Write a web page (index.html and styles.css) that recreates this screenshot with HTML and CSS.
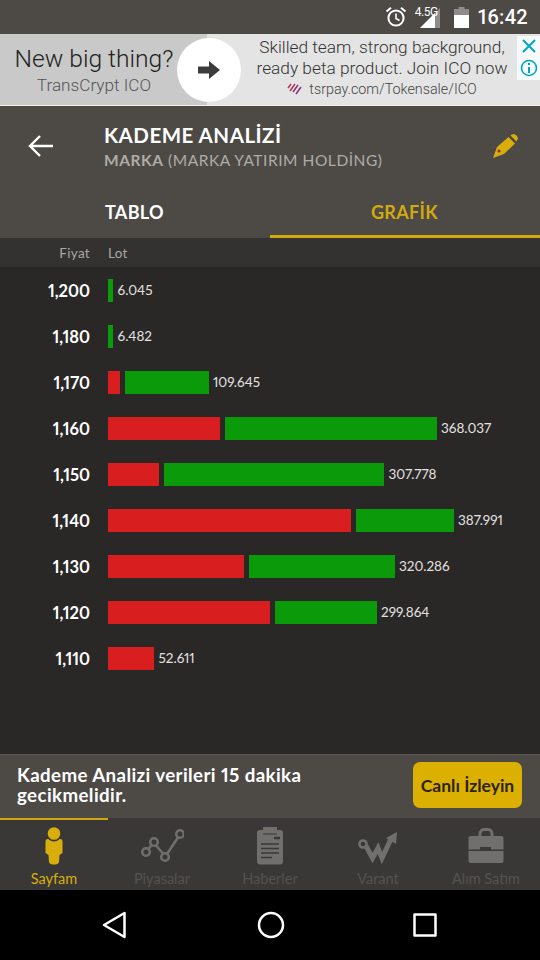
FILE: index.html
```html
<!DOCTYPE html>
<html lang="tr">
<head>
    <meta charset="UTF-8">
    <meta name="viewport" content="width=device-width, initial-scale=1.0">
    <title>Kademe Analizi</title>
    <link rel="stylesheet" href="styles.css">
</head>
<body>
    <div class="phone">
        <div class="status-bar">
            <svg class="st-alarm" width="22" height="22" viewBox="0 0 22 22" fill="none" stroke="#fff">
                <circle cx="11" cy="12" r="7.6" stroke-width="2"/>
                <path d="M11 7.5V12.5L14.5 14.5" stroke-width="1.6"/>
                <path d="M1.5 5.5L6 1.8M20.5 5.5L16 1.8" stroke-width="2"/>
            </svg>
            <div class="st-signal">
                <span class="st-net">4.5G</span>
                <svg width="20" height="20" viewBox="0 0 20 20">
                    <path d="M20 0V20H0Z" fill="#8f8c89"/>
                    <path d="M15 5V20H0Z" fill="#fff"/>
                </svg>
            </div>
            <svg class="st-batt" width="15" height="21" viewBox="0 0 15 21">
                <path d="M4.5 0H10.5V2H15V21H0V2H4.5Z" fill="#8f8c89"/>
                <path d="M0 8H15V21H0Z" fill="#fff"/>
            </svg>
            <span class="st-time">16:42</span>
        </div>

        <div class="ad">
            <div class="ad-left">
                <div class="ad-title">New big thing?</div>
                <div class="ad-sub">TransCrypt ICO</div>
            </div>
            <div class="ad-right">
                <div class="ad-copy">Skilled team, strong background,<br>ready beta product. Join ICO now</div>
                <div class="ad-link">
                    <svg width="16" height="14" viewBox="0 0 16 14" fill="none" stroke-width="1.6">
                        <path d="M1 6L4 2M3 9L8 2" stroke="#b8395f"/>
                        <path d="M6 10L11 3M9 12L14 5" stroke="#8a3a78"/>
                    </svg>
                    <span>tsrpay.com/Tokensale/ICO</span>
                </div>
            </div>
            <div class="ad-go">
                <svg width="22" height="18" viewBox="0 0 22 18"><path d="M0 5.5H11V0L22 9 11 18V12.5H0Z" fill="#3c3c3c"/></svg>
            </div>
            <div class="ad-badges">
                <svg width="16" height="16" viewBox="0 0 16 16" fill="none" stroke="#00a5c8" stroke-width="2"><path d="M2 2L14 14M14 2L2 14"/></svg>
                <svg width="18" height="18" viewBox="0 0 18 18" fill="none" stroke="#00a5c8" stroke-width="1.6">
                    <circle cx="9" cy="9" r="7.5"/>
                    <path d="M9 8V14M9 4V6" stroke-width="2"/>
                </svg>
            </div>
        </div>

        <div class="top-panel">
            <div class="title-row">
                <svg class="back" width="26" height="24" viewBox="0 0 26 24" fill="none" stroke="#fff" stroke-width="2.4"><path d="M25 12H2M12 2L2 12L12 22"/></svg>
                <div class="titles">
                    <h1>KADEME ANALİZİ</h1>
                    <p><b>MARKA</b> (MARKA YATIRIM HOLDİNG)</p>
                </div>
                <svg class="pencil" width="26" height="26" viewBox="0 0 26 26">
                    <path d="M1 25L5 14 16.5 4 23 10.5 12 21Z" fill="#d9ad0b"/>
                    <path d="M18.5 2.500C20.5.5 22.5.5 24.5 2.5S26 6.5 24.5 8.5Z" fill="#d9ad0b"/>
                    <circle cx="7" cy="18" r="1.6" fill="#8a3a18"/>
                </svg>
            </div>
            <div class="tabs">
                <div class="tab">TABLO</div>
                <div class="tab tab-on">GRAFİK</div>
            </div>
        </div>

        <div class="col-head">
            <span class="col-price">Fiyat</span>
            <span>Lot</span>
        </div>

        <div class="chart">
            <div class="row">
                <span class="price">1,200</span>
                <div class="bars"><i class="bar green" style="width:5px"></i><span class="lot">6.045</span></div>
            </div>
            <div class="row">
                <span class="price">1,180</span>
                <div class="bars"><i class="bar green" style="width:5px"></i><span class="lot">6.482</span></div>
            </div>
            <div class="row">
                <span class="price">1,170</span>
                <div class="bars"><i class="bar red" style="width:12px"></i><i class="bar green" style="width:84px"></i><span class="lot">109.645</span></div>
            </div>
            <div class="row">
                <span class="price">1,160</span>
                <div class="bars"><i class="bar red" style="width:112px"></i><i class="bar green" style="width:212px"></i><span class="lot">368.037</span></div>
            </div>
            <div class="row">
                <span class="price">1,150</span>
                <div class="bars"><i class="bar red" style="width:51px"></i><i class="bar green" style="width:220.5px"></i><span class="lot">307.778</span></div>
            </div>
            <div class="row">
                <span class="price">1,140</span>
                <div class="bars"><i class="bar red" style="width:243px"></i><i class="bar green" style="width:98px"></i><span class="lot">387.991</span></div>
            </div>
            <div class="row">
                <span class="price">1,130</span>
                <div class="bars"><i class="bar red" style="width:136px"></i><i class="bar green" style="width:146px"></i><span class="lot">320.286</span></div>
            </div>
            <div class="row">
                <span class="price">1,120</span>
                <div class="bars"><i class="bar red" style="width:162px"></i><i class="bar green" style="width:102px"></i><span class="lot">299.864</span></div>
            </div>
            <div class="row">
                <span class="price">1,110</span>
                <div class="bars"><i class="bar red" style="width:46px"></i><span class="lot">52.611</span></div>
            </div>
        </div>

        <div class="notice">
            <p>Kademe Analizi verileri 15 dakika<br>gecikmelidir.</p>
            <button type="button">Canlı İzleyin</button>
        </div>

        <nav class="tabbar">
            <div class="nav-item nav-on">
                <svg width="18" height="38" viewBox="0 0 18 38">
                    <path d="M3 12H15C17 12 17.5 13 17.5 15V26L14.5 28 14 35C13.5 37 11.5 37.5 9 37.5S4.5 37 4 35L3.5 28 .5 26V15C.5 13 1 12 3 12Z" fill="#d9ad0b"/>
                    <circle cx="9" cy="7" r="7.5" fill="#3a3836"/>
                    <circle cx="9" cy="6.5" r="6.3" fill="#d9ad0b"/>
                </svg>
                <span>Sayfam</span>
            </div>
            <div class="nav-item">
                <svg width="44" height="36" viewBox="0 0 44 36" fill="none" stroke="#716f6c" stroke-width="2.5">
                    <circle cx="6" cy="24" r="3.8"/>
                    <circle cx="14" cy="14" r="3.8"/>
                    <circle cx="25" cy="29" r="3.8"/>
                    <circle cx="40" cy="6" r="3.8"/>
                    <path d="M8.5 21L11.5 17M16 17.5L23 25.5M27 26L38 9.5"/>
                </svg>
                <span>Piyasalar</span>
            </div>
            <div class="nav-item">
                <svg width="26" height="38" viewBox="0 0 26 38">
                    <path d="M3 3H6V0H20V3H23C25 3 26 4 26 6V34C26 36.5 25 37.5 23 37.5H3C1 37.5 0 36.5 0 34V6C0 4 1 3 3 3Z" fill="#716f6c"/>
                    <path d="M4 17H22M4 21.5H22M4 26H22M4 30.5H15" stroke="#3a3836" stroke-width="1.6"/>
                    <path d="M17 11H23" stroke="#3a3836" stroke-width="2.5"/>
                    <path d="M6 7H20" stroke="#3a3836" stroke-width="1"/>
                </svg>
                <span>Haberler</span>
            </div>
            <div class="nav-item">
                <svg width="40" height="38" viewBox="0 0 40 38" fill="none">
                    <circle cx="5" cy="17" r="3.6" stroke="#716f6c" stroke-width="2.5"/>
                    <path d="M8 19L14.5 31 20 21 24 31 33 12" stroke="#716f6c" stroke-width="5"/>
                    <path d="M28 11L39 5 38 17Z" fill="#716f6c"/>
                </svg>
                <span>Varant</span>
            </div>
            <div class="nav-item">
                <svg width="36" height="36" viewBox="0 0 36 36">
                    <path d="M12 9V6C12 3 14 1.5 16 1.5H20C22 1.5 24 3 24 6V9" fill="none" stroke="#716f6c" stroke-width="3"/>
                    <path d="M3 8H33C35 8 35.5 9 35.5 11V21.5H.5V11C.5 9 1 8 3 8Z" fill="#716f6c"/>
                    <path d="M.5 23H35.5V32C35.5 34 35 35 33 35H3C1 35 .5 34 .5 32Z" fill="#716f6c"/>
                    <rect x="12" y="19" width="11" height="4" fill="#3a3836"/>
                </svg>
                <span>Alım Satım</span>
            </div>
        </nav>

        <div class="sys-nav">
            <svg width="26" height="28" viewBox="0 0 26 28" fill="none" stroke="#fff" stroke-width="2.5" stroke-linejoin="round"><path d="M22.5 2V26L2 14Z"/></svg>
            <svg width="28" height="28" viewBox="0 0 28 28" fill="none" stroke="#fff" stroke-width="2.5"><circle cx="14" cy="14" r="12"/></svg>
            <svg width="24" height="24" viewBox="0 0 24 24" fill="none" stroke="#fff" stroke-width="2.5" stroke-linejoin="round"><rect x="1.5" y="1.5" width="21" height="21"/></svg>
        </div>
    </div>
</body>
</html>
```

FILE: styles.css
```css
* {
    box-sizing: border-box;
}

body {
    margin: 0;
    font-family: Lato, "Open Sans", sans-serif;
    font-variant-numeric: proportional-nums;
    background-color: #2a2827;
}

.phone {
    width: 540px;
    height: 960px;
    display: flex;
    flex-direction: column;
    overflow: hidden;
}

/* status bar */
.status-bar {
    height: 34px;
    background-color: #4d4a46;
    display: flex;
    align-items: center;
    justify-content: flex-end;
    padding-right: 12px;
    color: #fff;
}

.st-alarm {
    margin-right: 8px;
}

.st-signal {
    position: relative;
    width: 25px;
    height: 20px;
    margin-top: 1px;
    margin-right: 14px;
    display: flex;
    justify-content: flex-end;
}

.st-net {
    position: absolute;
    left: 0;
    top: -3px;
    font-family: Roboto, sans-serif;
    font-size: 12px;
    letter-spacing: -.5px;
}

.st-batt {
    margin-right: 9px;
}

.st-time {
    font-family: Roboto, sans-serif;
    font-size: 20px;
    font-weight: 500;
    letter-spacing: .3px;
}

/* ad */
.ad {
    position: relative;
    height: 72px;
    display: flex;
    font-family: Roboto, sans-serif;
    font-weight: 300;
    border-bottom: 1px solid #f0f0f0;
}

.ad-left {
    width: 207px;
    padding-right: 19px;
    background-color: #c9c9c9;
    text-align: center;
}

.ad-title {
    margin-top: 10px;
    font-size: 24.6px;
    line-height: 30px;
    color: #222;
}

.ad-sub {
    margin-top: 1px;
    font-size: 17.2px;
    line-height: 20px;
    color: #555;
}

.ad-right {
    flex: 1;
    background-color: #e4e4e4;
    padding: 3px 23px 0 40px;
    text-align: center;
    color: #333;
}

.ad-copy {
    font-size: 17.3px;
    line-height: 21px;
    white-space: nowrap;
}

.ad-link {
    display: flex;
    align-items: center;
    justify-content: center;
    gap: 6px;
    font-size: 14.3px;
    line-height: 20px;
    color: #444;
}

.ad-go {
    position: absolute;
    left: 177px;
    top: 4px;
    width: 64px;
    height: 64px;
    border-radius: 50%;
    background-color: #fff;
    display: flex;
    align-items: center;
    justify-content: center;
}

.ad-badges {
    position: absolute;
    right: 0;
    top: 2px;
    width: 23px;
    height: 44px;
    padding-top: 2px;
    background-color: #f6fafb;
    display: flex;
    flex-direction: column;
    align-items: center;
    gap: 5px;
}

/* header */
.top-panel {
    height: 132px;
    background-color: #4d4a46;
    display: flex;
    flex-direction: column;
}

.title-row {
    height: 92px;
    display: flex;
    align-items: flex-start;
    padding: 17px 22px 0 28px;
}

.back {
    margin-top: 11px;
}

.titles {
    flex: 1;
    margin-left: 50px;
}

h1 {
    margin: 0;
    font-size: 20.5px;
    line-height: 24px;
    font-weight: 700;
    color: #fff;
    letter-spacing: .5px;
}

.titles p {
    margin: 2px 0 0;
    font-size: 15.5px;
    line-height: 22px;
    color: #aeaca9;
    letter-spacing: .55px;
}

.titles b {
    font-weight: 700;
}

.pencil {
    margin-top: 10px;
}

.tabs {
    flex: 1;
    display: flex;
}

.tab {
    width: 50%;
    padding: 3px 0 0 105px;
    font-size: 18px;
    font-weight: 700;
    color: #fff;
    letter-spacing: .3px;
}

.tab-on {
    padding-left: 101px;
    color: #d2a90e;
    border-bottom: 3px solid #d2a90e;
}

/* chart */
.col-head {
    height: 29px;
    background-color: #333230;
    display: flex;
    align-items: center;
    color: #a9a7a5;
    font-size: 13.5px;
    letter-spacing: .3px;
}

.col-price {
    width: 90px;
    margin-right: 18px;
    text-align: right;
}

.chart {
    flex: 1;
    background-color: #2a2827;
}

.row {
    height: 46px;
    display: flex;
    align-items: center;
}

.price {
    width: 90px;
    margin-right: 18px;
    padding-top: 1px;
    text-align: right;
    font-size: 16.5px;
    font-weight: 700;
    color: #fff;
}

.bars {
    display: flex;
    align-items: center;
    gap: 4.5px;
}

.bar {
    display: block;
    height: 23px;
}

.red {
    background-color: #d81e1e;
}

.green {
    background-color: #0a9a0a;
}

.lot {
    font-size: 13.5px;
    color: #e4e2e0;
}

/* notice */
.notice {
    height: 64px;
    background-color: #4d4a46;
    border-top: 1px solid #5a5754;
    display: flex;
    align-items: center;
    justify-content: space-between;
    padding: 0 18px 3px 17px;
}

.notice p {
    margin: 0;
    font-size: 18.7px;
    line-height: 20px;
    font-weight: 700;
    color: #fff;
    letter-spacing: .4px;
}

.notice button {
    width: 109px;
    height: 46px;
    padding: 0;
    border: none;
    border-radius: 7px;
    background-color: #dcb000;
    font-family: inherit;
    font-size: 17.5px;
    font-weight: 700;
    color: #2c2416;
}

/* bottom tabs */
.tabbar {
    height: 72px;
    background-color: #3a3836;
    display: flex;
}

.nav-item {
    width: 108px;
    padding-top: 9px;
    display: flex;
    flex-direction: column;
    align-items: center;
    font-size: 14.5px;
    color: #54524f;
}

.nav-item svg {
    height: 38px;
}

.nav-item span {
    margin-top: 5px;
    line-height: 17px;
}

.nav-on {
    color: #d9ad0b;
    border-top: 2px solid #d2a90e;
    padding-top: 7px;
}

.sys-nav {
    height: 70px;
    background-color: #000;
    display: flex;
    align-items: center;
    justify-content: space-between;
    padding: 0 103px 0 102px;
}
```
